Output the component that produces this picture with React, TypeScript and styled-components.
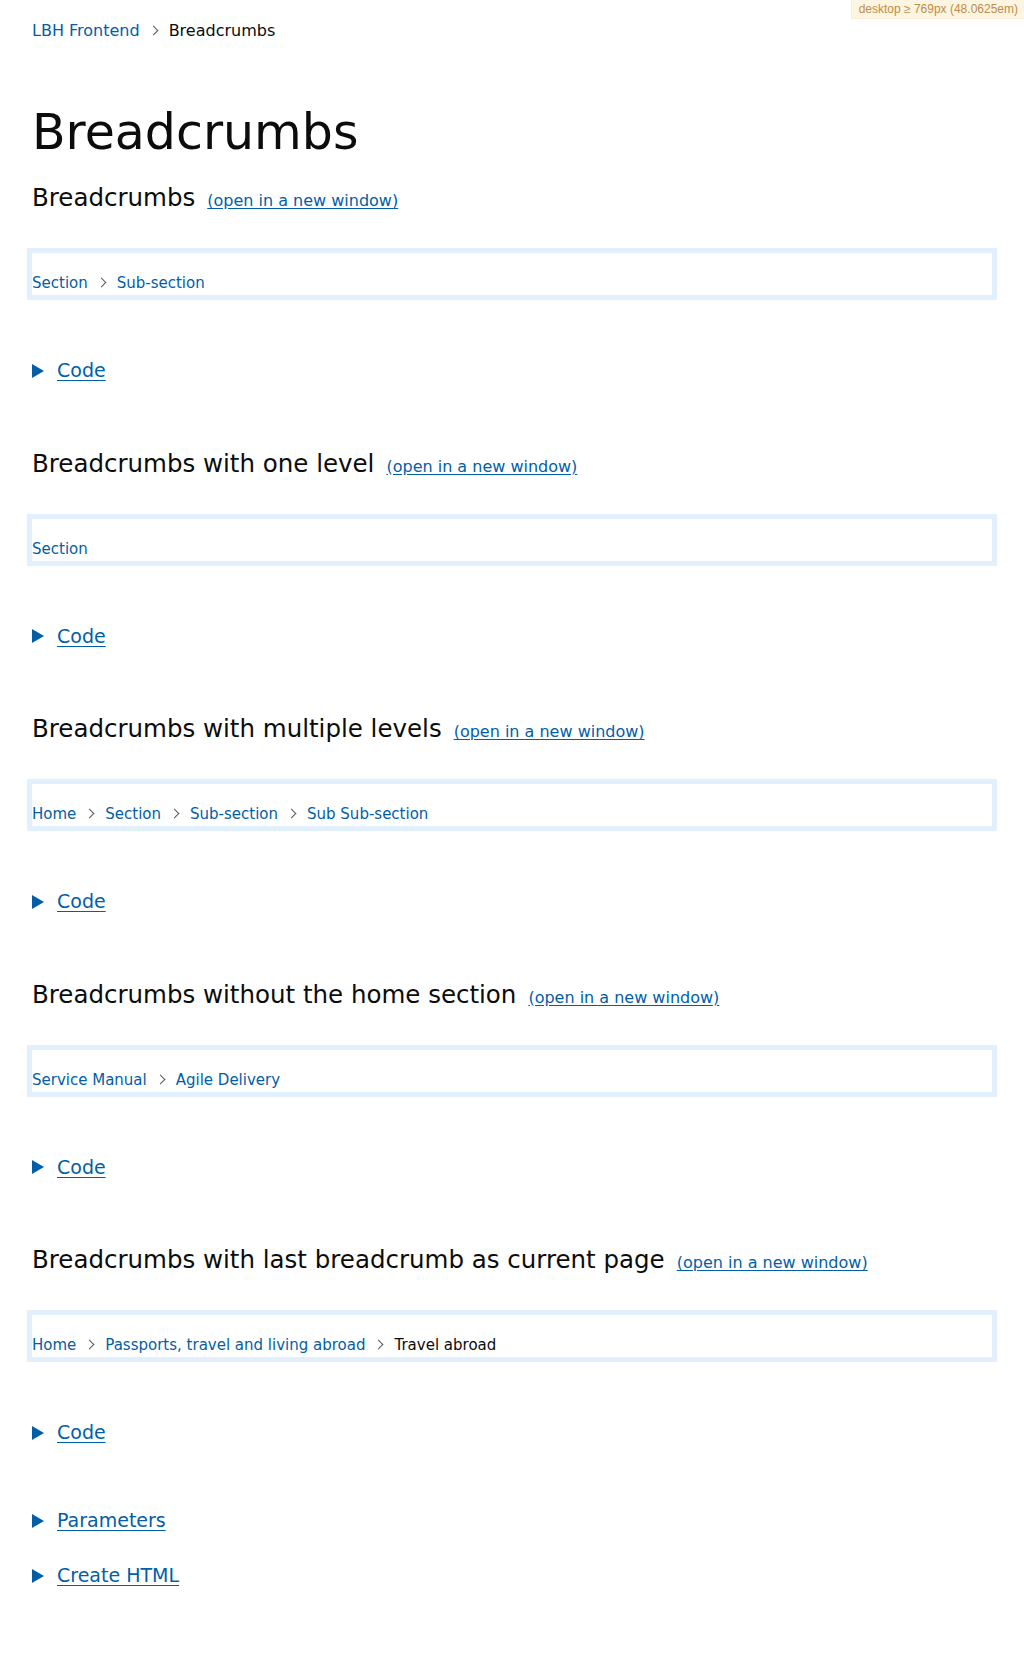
import React from "react";
import styled, { createGlobalStyle } from "styled-components";

const Global = createGlobalStyle`
  *, *::before, *::after { box-sizing: border-box; }
  html, body { margin: 0; padding: 0; background: #ffffff; }
  body {
    font-family: "DejaVu Sans", "Liberation Sans", sans-serif;
    color: #0b0c0c;
  }
`;

const BLUE = "#025ea6";

const Page = styled.div`
  padding: 0 32px 60px;
`;

const MqBadge = styled.div`
  position: fixed;
  top: 0;
  right: 0;
  background: #fcf5e1;
  border-bottom: 1px solid #fbeed5;
  border-left: 1px solid #fbeed5;
  color: #bf8c4a;
  font: 12px/1.5 "Liberation Sans", Arial, sans-serif;
  padding: 0 6px 0 7px;
  height: 19px;
  line-height: 18px;
  z-index: 10;
`;

const TopNav = styled.nav`
  padding-top: 21px;
`;

const CrumbList = styled.ol<{ $size: number }>`
  list-style: none;
  margin: 0;
  padding: 0;
  display: flex;
  flex-wrap: wrap;
  font-size: ${(p) => p.$size}px;
  line-height: 20px;
`;

const CrumbItem = styled.li<{ $gap: number }>`
  position: relative;
  & + & {
    margin-left: ${(p) => p.$gap}px;
    padding-left: 19px;
  }
  & + &::before {
    content: "";
    position: absolute;
    left: 0;
    top: 6.2px;
    width: 7px;
    height: 7px;
    border-top: 1px solid #505a5f;
    border-right: 1px solid #505a5f;
    transform: rotate(45deg);
  }
`;

const CrumbLink = styled.a`
  color: ${BLUE};
  text-decoration: none;
`;

const CrumbCurrent = styled.span`
  color: #0b0c0c;
`;

const Title = styled.h1`
  margin: 67px 0 25px;
  font-size: 49px;
  line-height: 50px;
  font-weight: 400;
  color: #0b0c0c;
`;

const Example = styled.section`
  & + & {
    margin-top: 65.5px;
  }
`;

const HeadingRow = styled.div`
  display: flex;
  align-items: baseline;
  gap: 12px;
`;

const ExampleTitle = styled.h2`
  margin: 0;
  font-size: 24.5px;
  line-height: 30px;
  font-weight: 400;
  color: #0b0c0c;
`;

const OpenLink = styled.a`
  font-size: 16px;
  line-height: 20px;
  color: ${BLUE};
  text-decoration: underline;
  text-underline-offset: 2px;
`;

const Preview = styled.div`
  margin: 35px -5px 0;
  border: 5px solid #e2effc;
  height: 52px;
  padding: 20px 0 2px;
`;

const Details = styled.details<{ $top: number }>`
  margin-top: ${(p) => p.$top}px;
`;

const Summary = styled.summary`
  display: flex;
  align-items: center;
  list-style: none;
  cursor: pointer;
  font-size: 19px;
  line-height: 25px;
  color: ${BLUE};
  &::-webkit-details-marker { display: none; }
`;

const Triangle = styled.span`
  width: 0;
  height: 0;
  border-style: solid;
  border-width: 7px 0 7px 12px;
  border-color: transparent transparent transparent ${BLUE};
  margin-right: 13px;
  flex: none;
`;

const SummaryText = styled.span`
  text-decoration: underline;
  text-underline-offset: 3px;
  text-decoration-thickness: 1px;
`;

type Crumb = { label: string; current?: boolean };

const examples: { title: string; crumbs: Crumb[] }[] = [
  { title: "Breadcrumbs", crumbs: [{ label: "Section" }, { label: "Sub-section" }] },
  { title: "Breadcrumbs with one level", crumbs: [{ label: "Section" }] },
  {
    title: "Breadcrumbs with multiple levels",
    crumbs: [
      { label: "Home" },
      { label: "Section" },
      { label: "Sub-section" },
      { label: "Sub Sub-section" },
    ],
  },
  {
    title: "Breadcrumbs without the home section",
    crumbs: [{ label: "Service Manual" }, { label: "Agile Delivery" }],
  },
  {
    title: "Breadcrumbs with last breadcrumb as current page",
    crumbs: [
      { label: "Home" },
      { label: "Passports, travel and living abroad" },
      { label: "Travel abroad", current: true },
    ],
  },
];

function Breadcrumbs({ crumbs, size, gap }: { crumbs: Crumb[]; size: number; gap: number }) {
  return (
    <CrumbList $size={size}>
      {crumbs.map((c) => (
        <CrumbItem key={c.label} $gap={gap}>
          {c.current ? (
            <CrumbCurrent aria-current="page">{c.label}</CrumbCurrent>
          ) : (
            <CrumbLink href="#">{c.label}</CrumbLink>
          )}
        </CrumbItem>
      ))}
    </CrumbList>
  );
}

function Disclosure({ label, top }: { label: string; top: number }) {
  return (
    <Details $top={top}>
      <Summary>
        <Triangle />
        <SummaryText>{label}</SummaryText>
      </Summary>
    </Details>
  );
}

export default function App() {
  return (
    <>
      <Global />
      <MqBadge>desktop ≥ 769px (48.0625em)</MqBadge>
      <Page>
        <TopNav aria-label="Breadcrumb">
          <Breadcrumbs
            size={16}
            gap={9}
            crumbs={[{ label: "LBH Frontend" }, { label: "Breadcrumbs", current: true }]}
          />
        </TopNav>
        <Title>Breadcrumbs</Title>
        {examples.map((ex) => (
          <Example key={ex.title}>
            <HeadingRow>
              <ExampleTitle>{ex.title}</ExampleTitle>
              <OpenLink href="#">(open in a new window)</OpenLink>
            </HeadingRow>
            <Preview>
              <Breadcrumbs size={15} gap={10} crumbs={ex.crumbs} />
            </Preview>
            <Disclosure label="Code" top={58} />
          </Example>
        ))}
        <Disclosure label="Parameters" top={63} />
        <Disclosure label="Create HTML" top={30} />
      </Page>
    </>
  );
}
